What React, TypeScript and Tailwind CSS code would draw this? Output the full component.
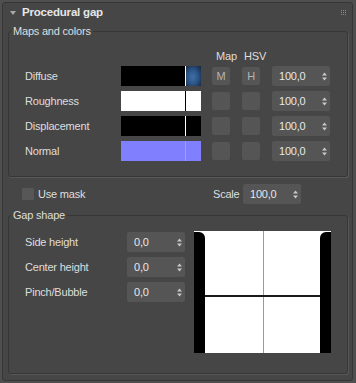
import React from "react";

const Arrows = () => (
  <svg width="5" height="9" viewBox="0 0 5 9">
    <polygon points="0,3.5 2.5,0.5 5,3.5" fill="#c8c8c8" />
    <polygon points="0,5.5 2.5,8.5 5,5.5" fill="#c8c8c8" />
  </svg>
);

const Spinner = ({ value, className }: { value: string; className: string }) => (
  <div className={`${className} h-[20px] bg-[#555555] rounded-[2px] flex items-center justify-between pl-[7px] pr-[3px]`}>
    <span className="text-[#e8e8e8]">{value}</span>
    <Arrows />
  </div>
);

const Btn = ({ label, className }: { label?: string; className: string }) => (
  <div className={`${className} w-[18px] h-[18px] bg-[#555555] rounded-[2px] flex items-center justify-center text-[#b4b4b4]`}>
    {label}
  </div>
);

const Swatch = ({ bg, line, thumb }: { bg: string; line: string; thumb: string }) => (
  <div className="w-[80px] h-[20px] flex">
    <div className={`w-[64px] h-full ${bg}`} />
    <div className={`w-[1px] h-full ${line}`} />
    <div className={`w-[15px] h-full ${thumb}`} />
  </div>
);

const Grip = () => (
  <div className="grid grid-cols-3 gap-[1px] ml-auto">
    {Array.from({ length: 9 }).map((_, i) => (
      <div key={i} className="w-[1px] h-[1px] bg-[#8c8c8c]" />
    ))}
  </div>
);

const rows = [
  { name: "Diffuse", bg: "bg-black", line: "bg-white", thumb: "bg-[radial-gradient(ellipse_at_45%_55%,#3f70a8_0%,#2d5687_45%,#1d3556_80%,#16263d_100%)]", m: "M", h: "H" },
  { name: "Roughness", bg: "bg-white", line: "bg-black", thumb: "bg-white" },
  { name: "Displacement", bg: "bg-black", line: "bg-white", thumb: "bg-black" },
  { name: "Normal", bg: "bg-[#8080ff]", line: "bg-[#9d9dff]", thumb: "bg-[#8080ff]" },
];

export default function App() {
  return (
    <div className="w-[356px] h-[383px] bg-[#4f4f4f] pt-[2px] pl-[2px] font-['Liberation_Sans',Arial,sans-serif] text-[11px] tracking-[-0.2px] text-[#dedede]">
      <div className="w-[351px] h-[379px] border border-[#363636] rounded-[3px] bg-[#464646] flex flex-col">
        <div className="h-[19px] flex items-center pl-[7px] pr-[6px] shrink-0">
          <svg width="6" height="4" viewBox="0 0 6 4">
            <polygon points="0,0 6,0 3,4" fill="#a8a8a8" />
          </svg>
          <span className="ml-[6px] font-bold text-[11.5px] text-[#e6e6e6]">Procedural gap</span>
          <Grip />
        </div>

        <fieldset className="ml-[5px] mt-[2px] w-[340px] border border-[#363636] rounded-[3px] shadow-[1px_1px_0_#585858]">
          <legend className="ml-[2px] px-[2px] leading-[14px]">Maps and colors</legend>
          <div className="pt-[11px] pl-[16px] pb-[15px] flex flex-col">
            <div className="h-[14px] flex items-center">
              <div className="ml-[191px] w-[28px]">Map</div>
              <div>HSV</div>
            </div>
            <div className="mt-[3px] flex flex-col gap-[5px]">
              {rows.map((r) => (
                <div key={r.name} className="h-[20px] flex items-center">
                  <div className="w-[96px]">{r.name}</div>
                  <Swatch bg={r.bg} line={r.line} thumb={r.thumb} />
                  <Btn className="ml-[11px]" label={r.m} />
                  <Btn className="ml-[12px]" label={r.h} />
                  <Spinner className="ml-[12px] w-[58px]" value="100,0" />
                </div>
              ))}
            </div>
          </div>
        </fieldset>

        <div className="mt-[7px] h-[20px] flex items-center pl-[19px]">
          <div className="w-[12px] h-[12px] bg-[#575757] rounded-[1px]" />
          <div className="ml-[4px] w-[175px]">Use mask</div>
          <div className="w-[30px]">Scale</div>
          <Spinner className="w-[58px]" value="100,0" />
        </div>

        <fieldset className="ml-[5px] mt-[4px] w-[340px] border border-[#363636] rounded-[3px] shadow-[1px_1px_0_#585858]">
          <legend className="ml-[2px] px-[2px] leading-[14px]">Gap shape</legend>
          <div className="pt-[9px] pl-[16px] pb-[20px] flex items-start">
            <div className="mt-[1px] flex flex-col gap-[5px]">
              {["Side height", "Center height", "Pinch/Bubble"].map((n) => (
                <div key={n} className="h-[20px] flex items-center">
                  <div className="w-[102px]">{n}</div>
                  <Spinner className="w-[58px]" value="0,0" />
                </div>
              ))}
            </div>
            <svg className="ml-[9px]" width="137" height="122" viewBox="0 0 137 122">
              <rect width="137" height="122" fill="#ffffff" />
              <path d="M0 1 H5 A6 6 0 0 1 11 7 V122 H0 Z" fill="#000000" />
              <path d="M137 1 H132 A6 6 0 0 0 126 7 V122 H137 Z" fill="#000000" />
              <line x1="69.5" y1="0" x2="69.5" y2="122" stroke="#9a9a9a" strokeWidth="1" />
              <rect x="11" y="64" width="115" height="2" fill="#1a1a1a" />
            </svg>
          </div>
        </fieldset>
      </div>
    </div>
  );
}
